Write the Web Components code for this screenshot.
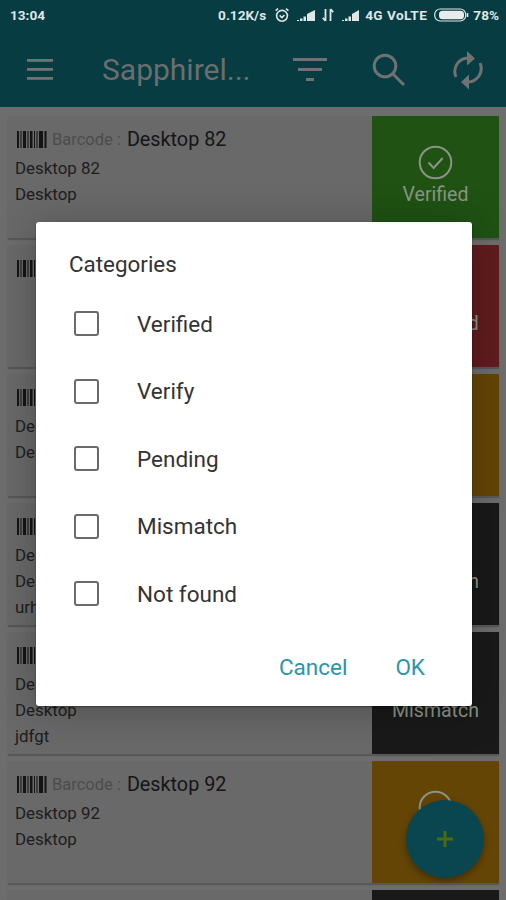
<!DOCTYPE html>
<html>
<head>
<meta charset="utf-8">
<style>
  html, body { margin: 0; height: 900px; overflow: hidden; background: #6d6d6d; font-family: Roboto, "Liberation Sans", sans-serif; }
</style>
</head>
<body>
<phone-screen>
  <status-bar></status-bar>
  <app-toolbar title="Sapphirel..."></app-toolbar>
  <scan-list>
    <scan-card code="Desktop 82" tile="verified" label="Verified">
      <span>Desktop 82</span><span>Desktop</span>
    </scan-card>
    <scan-card code="Desktop 85" tile="notfound" label="Not found"></scan-card>
    <scan-card code="Desktop 88" tile="verify" label="Verify">
      <span>Desktop 88</span><span>Desktop</span>
    </scan-card>
    <scan-card code="Desktop 89" tile="mismatch" label="Mismatch">
      <span>Desktop 89</span><span>Desktop</span><span>urhf</span>
    </scan-card>
    <scan-card code="Desktop 90" tile="mismatch" label="Mismatch">
      <span>Desktop 90</span><span>Desktop</span><span>jdfgt</span>
    </scan-card>
    <scan-card code="Desktop 92" tile="verify" label="Verify">
      <span>Desktop 92</span><span>Desktop</span>
    </scan-card>
    <scan-card tile="mismatch"></scan-card>
  </scan-list>
  <add-fab></add-fab>
  <categories-dialog heading="Categories">
    <check-row>Verified</check-row>
    <check-row>Verify</check-row>
    <check-row>Pending</check-row>
    <check-row>Mismatch</check-row>
    <check-row>Not found</check-row>
  </categories-dialog>
</phone-screen>

<script>
class PhoneScreen extends HTMLElement {
  constructor() {
    super()
    this.attachShadow({ mode: 'open' })
    this.shadowRoot.innerHTML = `
      <style>
        :host { display: flex; flex-direction: column; position: relative; width: 506px; height: 900px; overflow: hidden; }
      </style>
      <slot></slot>`
  }
}

class StatusBar extends HTMLElement {
  constructor() {
    super()
    this.attachShadow({ mode: 'open' })
    this.shadowRoot.innerHTML = `
      <style>
        :host { display: flex; align-items: center; height: 36px; padding: 0 7px 6px 10px; box-sizing: border-box; background: #063c42; color: #dfe6e6; font: 700 13.6px Roboto, sans-serif; flex: none; }
        .time { flex: 1; }
        .right { display: flex; align-items: center; }
        svg { display: block; }
      </style>
      <span class="time">13:04</span>
      <div class="right">
        <span>0.12K/s</span>
        <svg style="margin-left:8px" width="16" height="16" viewBox="0 0 16 16" fill="none" stroke="#dfe6e6" stroke-width="1.6"><circle cx="8" cy="8.8" r="5.4"/><path d="M5.6 8.4l2.4 2.2 2.4-2.6M1.6 3.6L4 1.6M14.4 3.6L12 1.6"/></svg>
        <svg style="margin-left:7px" width="19" height="13" viewBox="0 0 19 13" fill="#dfe6e6"><path d="M0 11h2v1H0zM3 9.500h2.500V12H3zM6.500 7.500H9V12H6.500zM10 5l8-4v11h-8z"/></svg>
        <svg style="margin-left:5px" width="14" height="14" viewBox="0 0 14 14" fill="none" stroke="#dfe6e6" stroke-width="1.8"><path d="M4.5 1v12M1.8 9.8l2.7 3M9.5 13V1M12.2 4.2L9.500 1"/></svg>
        <svg style="margin-left:7px" width="18" height="13" viewBox="0 0 18 13" fill="#dfe6e6"><path d="M0 11h2v1H0zM3 9.500h2.500V12H3zM6.500 7.500H9V12H6.500zM10 5l7-4v11h-7z"/></svg>
        <span style="margin-left:5px;letter-spacing:.45px">4G VoLTE</span>
        <svg style="margin-left:7px" width="35" height="14" viewBox="0 0 35 14"><rect x=".7" y="1" width="31" height="12" rx="5.5" fill="none" stroke="#dfe6e6" stroke-width="1.2"/><rect x="5" y="2.700" width="25" height="8.600" rx="3.500" fill="#e6ecec"/><rect x="32.700" y="5" width="1.600" height="4" fill="#dfe6e6"/></svg>
        <span style="margin-left:4px">78%</span>
      </div>`
  }
}

class AppToolbar extends HTMLElement {
  constructor() {
    super()
    this.attachShadow({ mode: 'open' })
    this.shadowRoot.innerHTML = `
      <style>
        :host { display: flex; align-items: center; height: 71px; padding: 0 0 4px 27px; box-sizing: border-box; background: #063c42; color: #6b6e6e; flex: none; }
        .title { font: 400 30px Roboto, sans-serif; margin-left: 49px; width: 191px; white-space: nowrap; }
        svg { display: block; flex: none; }
      </style>
      <svg width="26" height="22" viewBox="0 0 26 22" fill="#6f7272"><rect y="0" width="26" height="2.800"/><rect y="9" width="26" height="2.800"/><rect y="18" width="26" height="2.800"/></svg>
      <span class="title"></span>
      <svg width="34" height="24" viewBox="0 0 34 24" fill="#6f7272"><rect y="0" width="34" height="3"/><rect x="5" y="10" width="24" height="3"/><rect x="13" y="20" width="8" height="3"/></svg>
      <svg style="margin-left:45px" width="33" height="33" viewBox="0 0 33 33" fill="none" stroke="#6f7272" stroke-width="3"><circle cx="13" cy="13" r="10.800"/><path d="M20.500 20.500L32 32"/></svg>
      <svg style="margin-left:47px" width="32" height="40" viewBox="0 0 32 40" fill="none" stroke="#6f7272" stroke-width="3"><path d="M4 27a13.500 13.500 0 0 1 12-19"/><path d="M28 13a13.500 13.500 0 0 1-12 19"/><path fill="#6f7272" stroke="none" d="M15 1l8 7.500-8 7zM17 24.500v15l-8-7.500z"/></svg>`
    this.shadowRoot.querySelector('.title').textContent = this.getAttribute('title')
    this.removeAttribute('title')
  }
}

class ScanList extends HTMLElement {
  constructor() {
    super()
    this.attachShadow({ mode: 'open' })
    this.shadowRoot.innerHTML = `
      <style>
        :host { display: grid; grid-auto-rows: 122px; row-gap: 7px; padding: 9px 7px 0 8px; }
      </style>
      <slot></slot>`
  }
}

const tileColors = { verified: '#1f5213', notfound: '#5f1c1e', verify: '#644505', mismatch: '#191919' }

class ScanCard extends HTMLElement {
  constructor() {
    super()
    this.attachShadow({ mode: 'open' })
    this.shadowRoot.innerHTML = `
      <style>
        :host { display: flex; background: #696969; box-shadow: 0 2px 1px #585858; font-family: Roboto, sans-serif; }
        .info { flex: 1; padding: 12px 0 0 7px; color: #1d1d1d; }
        .head { display: flex; align-items: center; height: 22px; }
        .head svg { margin: 0 5px 0 2px; }
        .caption { font-size: 16.500px; color: #4c4c4c; margin-right: 6px; }
        .code { font-size: 19.800px; color: #151515; }
        ::slotted(span) { display: block; font-size: 16.900px; line-height: 26px; }
        .lines { padding-top: 5px; display: block; }
        .tile { width: 127px; flex: none; display: flex; flex-direction: column; align-items: center; padding-top: 29px; box-sizing: border-box; gap: 3px; color: #8c9488; font-size: 19.500px; }
        .tile svg { display: block; }
      </style>
      <div class="info">
        <div class="head">
          <svg width="30" height="17" viewBox="0 0 30 17" fill="#141414"><path d="M0 0h2v17H0zM3.500 0h1v17h-1zM6 0h3v17H6zM10.500 0h1v17h-1zM13 0h2.500v17H13zM17 0h1v17h-1zM19.500 0h1v17h-1zM22 0h4v17h-4zM27.500 0h2v17h-2z"/></svg>
          <span class="caption">Barcode :</span>
          <span class="code"></span>
        </div>
        <div class="lines"><slot></slot></div>
      </div>
      <div class="tile">
        <svg width="35" height="35" viewBox="0 0 35 35" fill="none" stroke="#8c9488" stroke-width="2"><circle cx="17.500" cy="17.500" r="15.800"/><path d="M10.500 17.500l5.200 5.500 9-10"/></svg>
        <span class="label"></span>
      </div>`
    if (this.hasAttribute('code')) {
      this.shadowRoot.querySelector('.code').textContent = this.getAttribute('code')
    } else {
      // last row only peeks in at the bottom edge
      this.shadowRoot.querySelector('.head').remove()
    }
    this.shadowRoot.querySelector('.label').textContent = this.getAttribute('label')
    this.shadowRoot.querySelector('.tile').style.background = tileColors[this.getAttribute('tile')]
  }
}

class AddFab extends HTMLElement {
  constructor() {
    super()
    this.attachShadow({ mode: 'open' })
    this.shadowRoot.innerHTML = `
      <style>
        :host { position: absolute; left: 406px; top: 800px; width: 78px; height: 78px; border-radius: 50%; background: #094650; display: flex; align-items: center; justify-content: center; box-shadow: 0 3px 7px rgba(0,0,0,.35); }
      </style>
      <svg width="16" height="16" viewBox="0 0 16 16" fill="#4f6a0e"><rect x="6.500" width="3" height="16"/><rect y="6.500" width="16" height="3"/></svg>`
  }
}

class CategoriesDialog extends HTMLElement {
  constructor() {
    super()
    this.attachShadow({ mode: 'open' })
    this.shadowRoot.innerHTML = `
      <style>
        :host { position: absolute; left: 36px; top: 222px; width: 436px; height: 484px; box-sizing: border-box; padding: 29px 0 0; background: #fff; border-radius: 3px; box-shadow: 0 4px 40px rgba(0,0,0,.25), 0 1px 2px rgba(0,0,0,.4); display: flex; flex-direction: column; font-family: Roboto, sans-serif; }
        h2 { margin: 0 0 0 33px; font: 400 22.400px/26px Roboto, sans-serif; color: #333; }
        .rows { display: block; margin-top: 13px; }
        .actions { display: flex; justify-content: flex-end; gap: 48px; padding-right: 47px; margin-top: 24px; color: #2a96aa; font-size: 22.500px; line-height: 30px; }
      </style>
      <h2></h2>
      <div class="rows"><slot></slot></div>
      <div class="actions"><span>Cancel</span><span>OK</span></div>`
    this.shadowRoot.querySelector('h2').textContent = this.getAttribute('heading')
  }
}

class CheckRow extends HTMLElement {
  constructor() {
    super()
    this.attachShadow({ mode: 'open' })
    this.shadowRoot.innerHTML = `
      <style>
        :host { display: flex; align-items: center; height: 67.500px; padding-left: 38px; color: #333; font: 400 22.500px Roboto, sans-serif; }
        .box { width: 25px; height: 25px; box-sizing: border-box; border: 2.500px solid #6a6a6a; border-radius: 3px; margin-right: 38px; flex: none; }
      </style>
      <div class="box"></div>
      <slot></slot>`
  }
}

customElements.define('phone-screen', PhoneScreen)
customElements.define('status-bar', StatusBar)
customElements.define('app-toolbar', AppToolbar)
customElements.define('scan-list', ScanList)
customElements.define('scan-card', ScanCard)
customElements.define('add-fab', AddFab)
customElements.define('categories-dialog', CategoriesDialog)
customElements.define('check-row', CheckRow)
</script>
</body>
</html>
